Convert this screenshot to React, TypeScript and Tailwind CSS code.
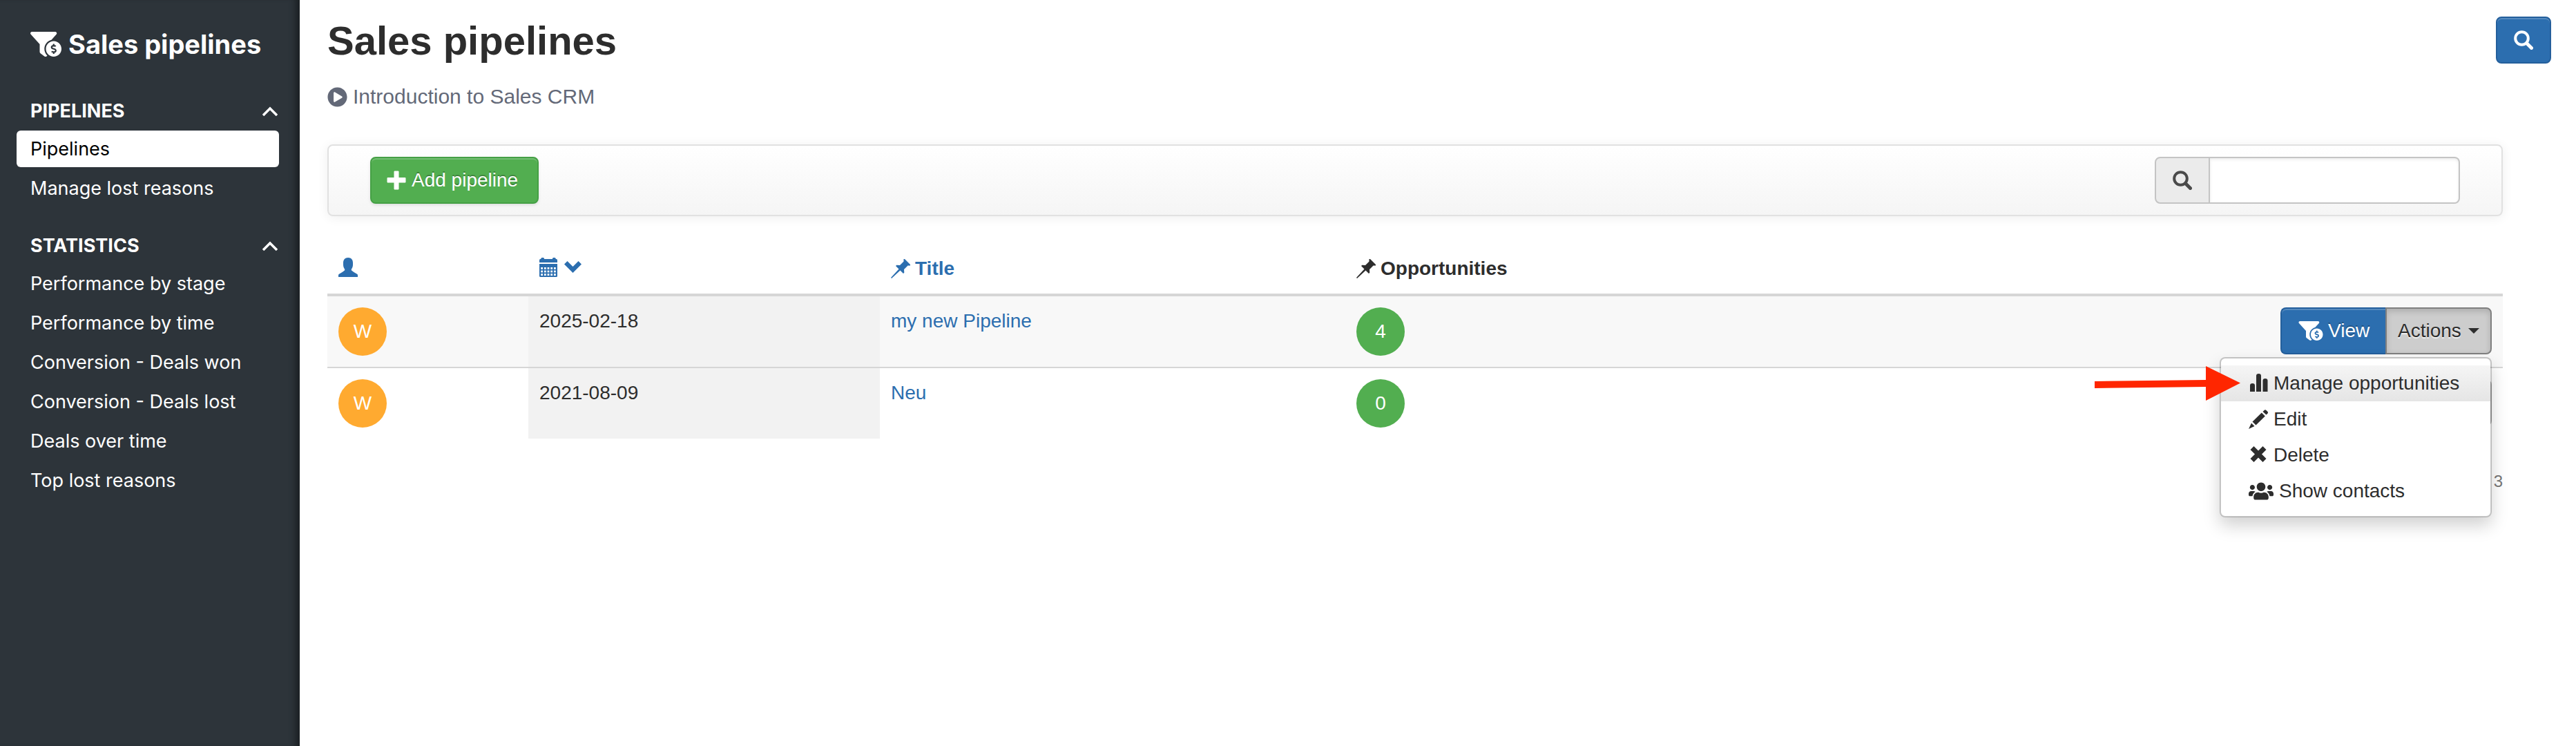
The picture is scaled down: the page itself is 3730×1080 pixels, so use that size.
import { useState, type ReactNode } from "react";
import { FaFunnelDollar, FaUsers, FaPlayCircle } from "react-icons/fa";

const menu = [
  { title: "PIPELINES", items: ["Pipelines", "Manage lost reasons"] },
  {
    title: "STATISTICS",
    items: [
      "Performance by stage",
      "Performance by time",
      "Conversion - Deals won",
      "Conversion - Deals lost",
      "Deals over time",
      "Top lost reasons",
    ],
  },
];

const pipelines = [
  { id: 1, owner: "W", date: "2025-02-18", title: "my new Pipeline", opportunities: 4 },
  { id: 2, owner: "W", date: "2021-08-09", title: "Neu", opportunities: 0 },
];

function Glyph({ children }: { children: ReactNode }) {
  return (
    <svg viewBox="0 0 28 28" className="w-7 h-7 shrink-0" fill="currentColor" aria-hidden="true">
      {children}
    </svg>
  );
}

function SearchGlyph() {
  return (
    <Glyph>
      <circle cx="11.5" cy="11.5" r="9.3" fill="none" stroke="currentColor" strokeWidth="4" />
      <path d="M18.5 18.5 L25.5 25.5" stroke="currentColor" strokeWidth="5" strokeLinecap="round" />
    </Glyph>
  );
}

function PinGlyph() {
  return (
    <Glyph>
      <path d="M18.5 0 L20 0 L28 8 V9.5 H24.5 L19 15 L19.3 19.7 L18 21 L13.5 16.5 L1 28 L0 27 L11.5 14.5 L7 10 L8.3 8.7 L13 9 L18.5 3.5 Z" />
    </Glyph>
  );
}

function UserGlyph() {
  return (
    <Glyph>
      <path d="M14 0 C18.5 0 21 3 21 7.5 V10.5 C21 13 20 15.5 18.8 16.8 V18.3 C21 20.5 24.5 22 27 23.8 C28 24.5 28 25 28 26 V28 H0 V26 C0 25 0 24.5 1 23.8 C3.5 22 7 20.5 9.2 18.3 V16.8 C8 15.5 7 13 7 10.5 V7.5 C7 3 9.5 0 14 0 Z" />
    </Glyph>
  );
}

function CalendarGlyph() {
  const cells = [0, 1, 2].flatMap((row) => [0, 1, 2, 3, 4].map((col) => ({ row, col })));
  return (
    <Glyph>
      <path d="M0 7 V3.5 Q0 2 1.5 2 H2 Q2.5 0 4 0 H5.5 Q7 0 7.2 2 H18.8 Q19 0 20.5 0 H22 Q23.5 0 24 2 H24.5 Q26 2 26 3.5 V7 Z" />
      <path d="M0 9 H26 V26.5 Q26 28 24.5 28 H1.5 Q0 28 0 26.5 Z" />
      {cells.map(({ row, col }) => (
        <rect key={`${row}-${col}`} x={2.2 + col * 4.7} y={14 + row * 4.6} width="2.8" height="2.8" fill="white" />
      ))}
    </Glyph>
  );
}

function ItemIcon({ name }: { name: string }) {
  if (name === "chart") {
    return (
      <Glyph>
        <path d="M2 26 V17 Q2 14 5.5 14 Q9 14 9 17 V26 Z M11 26 V3 Q11 0 14.5 0 Q18 0 18 3 V26 Z M20.5 26 V10 Q20.5 7 24 7 Q27.5 7 27.500 10 V26 Z" />
      </Glyph>
    );
  }
  if (name === "pencil") {
    return (
      <Glyph>
        <path d="M22.5 1 Q24 -0.5 25.5 1 L27.5 3 Q28.500 4.500 27.500 5.500 L25.500 7.500 L20.500 3 Z" />
        <path d="M18.8 4.5 L23.8 9.5 L10.5 22.5 L5.500 17.500 Z" />
        <path d="M4 19.500 L8.500 24 L0 28 Z" />
      </Glyph>
    );
  }
  return (
    <Glyph>
      <path d="M7.500 1 L14 7.500 L20.500 1 L25.500 6 L19 12.500 L25.500 19 L20.500 24 L14 17.500 L7.500 24 L2.500 19 L9 12.500 L2.500 6 Z" />
    </Glyph>
  );
}

function Sidebar() {
  const [active, setActive] = useState("Pipelines");

  return (
    <aside className="w-[434px] shrink-0 bg-[#2d343a] pl-6 pr-[30px] text-white font-['Inter','Open_Sans',sans-serif] shadow-[inset_-12px_0_10px_-6px_#1b2023]">
      <div className="flex items-center gap-2.5 pl-5 pt-10 h-[88px] text-[38px] leading-[44px] font-bold whitespace-nowrap">
        <FaFunnelDollar className="w-[45px] h-9 shrink-0" />
        <span>Sales pipelines</span>
      </div>
      <nav className="flex flex-col gap-7 pt-11">
        {menu.map((section) => (
          <section key={section.title}>
            <button className="w-full h-[57px] pl-5 pr-0.5 flex items-center justify-between text-[27px] font-bold">
              {section.title}
              <svg viewBox="0 0 22 14" className="w-[22px] h-3.5" aria-hidden="true">
                <path d="M1 13 L11 3 L21 13" fill="none" stroke="white" strokeWidth="3.5" />
              </svg>
            </button>
            <ul className="flex flex-col gap-1">
              {section.items.map((item) => (
                <li key={item}>
                  <a
                    href="#"
                    onClick={() => setActive(item)}
                    className={`block pl-5 h-[53px] leading-[53px] text-[27px] rounded-md whitespace-nowrap ${
                      active === item ? "bg-white text-black" : ""
                    }`}
                  >
                    {item}
                  </a>
                </li>
              ))}
            </ul>
          </section>
        ))}
      </nav>
    </aside>
  );
}

const actions = [
  { label: "Manage opportunities", icon: "chart" },
  { label: "Edit", icon: "pencil" },
  { label: "Delete", icon: "remove" },
  { label: "Show contacts", icon: "users" },
];

function ActionsMenu() {
  return (
    <div className="absolute right-0 top-[72px] z-10 w-[394px] py-2.5 bg-white bg-clip-padding border-2 border-black/20 rounded-lg shadow-[0_12px_24px_rgba(0,0,0,0.18)]">
      <ul>
        {actions.map((action, i) => (
          <li key={action.label}>
            <a
              href="#"
              className={`flex items-center gap-2 h-[52px] pl-10 whitespace-nowrap ${
                i === 0 ? "bg-linear-to-b from-[#f5f5f5] to-[#e5e5e5]" : ""
              }`}
            >
              {action.icon === "users" ? <FaUsers className="w-9 h-9" /> : <ItemIcon name={action.icon} />}
              {action.label}
            </a>
          </li>
        ))}
      </ul>
      {/* Pointer to the highlighted entry */}
      <svg viewBox="0 0 211 50" className="absolute -left-[183px] top-[11px] w-[211px] h-[50px]" aria-hidden="true">
        <path d="M0 22 L161 20 V0 L211 24.5 L161 50 V30 L0 32 Z" fill="#ff2600" />
      </svg>
    </div>
  );
}

function RowActions({ open, onToggle }: { open: boolean; onToggle: () => void }) {
  return (
    <div className="relative inline-flex align-top text-left">
      <button className="flex items-center gap-[7px] h-[68px] w-[152px] px-6 rounded-l-lg border-2 border-r-0 border-[#245f9c] bg-[#2c6eaf] text-white text-shadow-[0_-2px_0_rgba(0,0,0,0.25)] shadow-[inset_0_2px_0_rgba(255,255,255,0.2)]">
        <FaFunnelDollar className="w-9 h-7 shrink-0" />
        View
      </button>
      <button
        onClick={onToggle}
        aria-expanded={open}
        className={`flex items-center justify-between h-[68px] w-[154px] px-4 rounded-r-lg border-2 text-shadow-[0_2px_1px_rgba(255,255,255,0.75)] ${
          open
            ? "border-[#7f7f7f] bg-[#cdcdcd] shadow-[inset_0_4px_8px_rgba(0,0,0,0.15)]"
            : "border-[#b3b3b3] bg-[#ededed]"
        }`}
      >
        Actions
        <svg viewBox="0 0 16 8" className="w-4 h-2" aria-hidden="true">
          <path d="M0 0 H16 L8 8 Z" fill="#2d2d2d" />
        </svg>
      </button>
      {open && <ActionsMenu />}
    </div>
  );
}

export default function App() {
  const [openRow, setOpenRow] = useState<number | null>(1);

  return (
    <div className="flex min-h-screen bg-white text-[#2d2d2d] text-[28px] leading-10 font-['Liberation_Sans',Arial,sans-serif]">
      <Sidebar />

      <main className="flex-1 min-w-0 pl-10 pr-9 pt-6">
        <header className="flex items-start justify-between">
          <div>
            <h1 className="text-[58px] leading-[70px] font-bold">Sales pipelines</h1>
            <a href="#" className="flex items-center gap-2 mt-[26px] text-[30px] text-[#636978]">
              <FaPlayCircle className="w-[29px] h-[29px]" />
              Introduction to Sales CRM
            </a>
          </div>
          <button
            aria-label="Search"
            className="flex items-center justify-center w-20 h-[68px] rounded-lg border-2 border-[#245f9c] bg-[#2c6eaf] text-white shadow-[inset_0_2px_0_rgba(255,255,255,0.2)]"
          >
            <SearchGlyph />
          </button>
        </header>

        <div className="mr-[70px]">
          {/* Toolbar */}
          <div className="mt-[49px] flex justify-between py-4 px-[60px] border-2 border-[#e1e1e1] rounded-lg bg-linear-to-b from-white to-[#f5f5f5] shadow-[0_2px_16px_rgba(0,0,0,0.07)]">
            <button className="flex items-center gap-2 h-[68px] w-[244px] pl-[22px] rounded-lg border-2 border-[#45a045] bg-[#52ae50] text-white whitespace-nowrap text-shadow-[0_-2px_0_rgba(0,0,0,0.25)] shadow-[inset_0_2px_0_rgba(255,255,255,0.2),0_2px_4px_rgba(0,0,0,0.1)]">
              <Glyph>
                <path d="M11 1 H17 V10.5 H27 V17 H17 V27 H11 V17 H1 V10.5 H11 Z" stroke="currentColor" strokeLinejoin="round" />
              </Glyph>
              Add pipeline
            </button>
            <div className="flex w-[442px] h-[68px]">
              <label
                htmlFor="filter"
                className="flex items-center justify-center w-20 shrink-0 rounded-l-lg border-2 border-[#c4c4c4] bg-[#ebebeb] text-[#4a4a4a]"
              >
                <SearchGlyph />
              </label>
              <input
                id="filter"
                aria-label="Filter pipelines"
                className="flex-1 min-w-0 px-4 bg-white border-2 border-l-0 border-[#c4c4c4] rounded-r-lg outline-none shadow-[inset_0_2px_4px_rgba(0,0,0,0.08)]"
              />
            </div>
          </div>

          <table className="mt-10 w-full table-fixed border-collapse text-left">
            <thead>
              <tr className="text-[#2c6eaf]">
                <th className="w-[291px] p-4">
                  <a href="#" aria-label="Owner" className="flex items-start pt-1 h-10">
                    <UserGlyph />
                  </a>
                </th>
                <th className="w-[509px] p-4">
                  <a href="#" aria-label="Date" className="flex items-start gap-2 pt-1 h-10">
                    <CalendarGlyph />
                    <Glyph>
                      <path d="M0 9.5 L4.5 5 L12.5 13 L20.5 5 L25 9.5 L12.5 22 Z" />
                    </Glyph>
                  </a>
                </th>
                <th className="w-[674px] p-4">
                  <a href="#" className="flex items-center gap-[7px] h-10">
                    <PinGlyph />
                    Title
                  </a>
                </th>
                <th className="w-[700px] p-4 text-[#2d2d2d]">
                  <span className="flex items-center gap-[7px] h-10">
                    <PinGlyph />
                    Opportunities
                  </span>
                </th>
                <th className="p-4" />
              </tr>
            </thead>
            <tbody>
              {pipelines.map((row, i) => (
                <tr
                  key={row.id}
                  className={`align-top border-[#d6d6d6] ${i === 0 ? "border-t-4 bg-[#f8f8f8]" : "border-t-2"}`}
                >
                  <td className="p-4">
                    <div className="flex items-center justify-center w-[70px] h-[70px] rounded-full bg-[#ffaa30] text-white">
                      {row.owner}
                    </div>
                  </td>
                  <td className="p-4 bg-[#f2f2f2]">{row.date}</td>
                  <td className="p-4">
                    <a href="#" className="text-[#2c6eaf]">
                      {row.title}
                    </a>
                  </td>
                  <td className="p-4">
                    <div className="flex items-center justify-center w-[70px] h-[70px] rounded-full bg-[#52ae50] text-white">
                      {row.opportunities}
                    </div>
                  </td>
                  <td className="p-4 text-right">
                    <RowActions
                      open={openRow === row.id}
                      onToggle={() => setOpenRow(openRow === row.id ? null : row.id)}
                    />
                  </td>
                </tr>
              ))}
            </tbody>
          </table>

          <p className="mt-[42px] text-right text-[24px] text-[#777777]">3</p>
        </div>
      </main>
    </div>
  );
}
